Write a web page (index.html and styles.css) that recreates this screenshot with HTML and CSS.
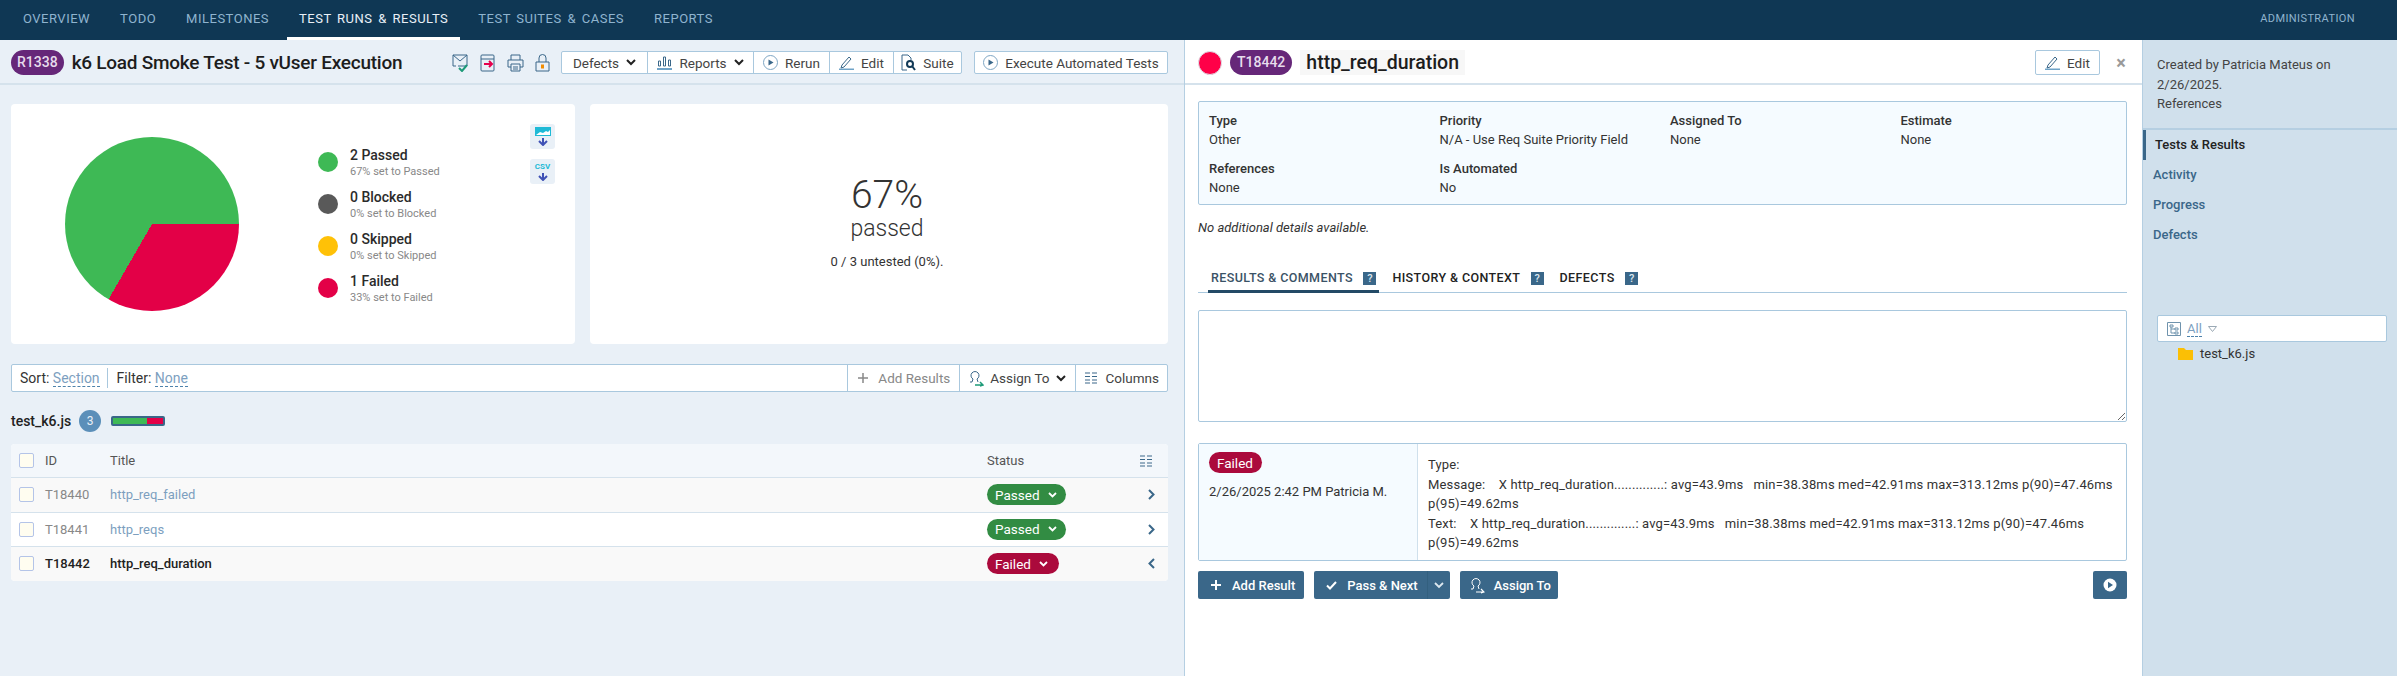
FILE: index.html
```html
<!DOCTYPE html>
<html lang="en">

<head>
    <meta charset="UTF-8">
    <title>k6 Load Smoke Test - 5 vUser Execution</title>
    <link rel="stylesheet" href="styles.css">
</head>

<body>

    <div class="topnav">
        <a href="#" class="tab">Overview</a>
        <a href="#" class="tab">Todo</a>
        <a href="#" class="tab">Milestones</a>
        <a href="#" class="tab active">Test Runs &amp; Results</a>
        <a href="#" class="tab">Test Suites &amp; Cases</a>
        <a href="#" class="tab">Reports</a>
        <a href="#" class="tab admin">Administration</a>
    </div>

    <div class="main">

        <div class="left">
            <div class="run-head">
                <span class="pill">R1338</span>
                <h1>k6 Load Smoke Test - 5 vUser Execution</h1>
                <div class="head-icons">
                    <svg width="17" height="18" viewBox="0 0 17 18"><path d="M1 1h14v11H6M1 1v11h3M1 1l7 6 7-6" fill="none" stroke="#3a6789"/><path d="M7 14l3 3 5-6" fill="none" stroke="#1d9a78" stroke-width="2"/></svg>
                    <svg width="16" height="18" viewBox="0 0 16 18"><path d="M2 1h11a1 1 0 0 1 1 1v14a1 1 0 0 1-1 1H2a1 1 0 0 1-1-1V2a1 1 0 0 1 1-1zM1 5h13" fill="none" stroke="#3a6789"/><path d="M4 10h8M9 7l3 3-3 3" fill="none" stroke="#e6004c" stroke-width="2"/></svg>
                    <svg width="17" height="18" viewBox="0 0 17 18"><path d="M4 6V1h9v5M4 13H1V6h15v7h-3M4 10h9v7H4zM6 13h5M6 15h5" fill="none" stroke="#3a6789"/></svg>
                    <svg width="15" height="18" viewBox="0 0 15 18"><path d="M1 8h13v9H1zM4 8V4a3.500 3.500 0 0 1 7 0v4" fill="none" stroke="#3a6789"/><path d="M7.500 10.500v4" stroke="#f28c00" stroke-width="3"/></svg>
                </div>
                <div class="btn-group">
                    <a href="#" class="btn btn-defects">Defects <svg class="chev" width="10" height="7" viewBox="0 0 10 7"><path d="M1 1l4 4 4-4" fill="none" stroke="#222" stroke-width="2"/></svg></a>
                    <a href="#" class="btn btn-reports"><svg width="15" height="15" viewBox="0 0 15 15"><path d="M1.500 11V6h2v5zM6.500 11V2h2v9zM11.500 11V5h2v6z" fill="none" stroke="#3a6789"/><path d="M0 14h15" stroke="#6fa3c7" stroke-width="2"/></svg> Reports <svg class="chev" width="10" height="7" viewBox="0 0 10 7"><path d="M1 1l4 4 4-4" fill="none" stroke="#222" stroke-width="2"/></svg></a>
                    <a href="#" class="btn btn-rerun"><svg width="15" height="15" viewBox="0 0 15 15"><circle cx="7.500" cy="7.500" r="7" fill="none" stroke="#7fa6c4"/><path d="M5.500 4.500l5 3-5 3z" fill="#3a6789"/></svg> Rerun</a>
                    <a href="#" class="btn btn-edit"><svg width="15" height="15" viewBox="0 0 15 15"><path d="M3 10l7-8 2 2-7 8-3 1z" fill="none" stroke="#3a6789"/><path d="M0 14.500h15" stroke="#6fa3c7" stroke-width="2"/></svg> Edit</a>
                    <a href="#" class="btn btn-suite"><svg width="15" height="17" viewBox="0 0 15 17"><path d="M6 16H1V1h6l3 3v2" fill="none" stroke="#3a6789"/><circle cx="9" cy="10" r="3" fill="none" stroke="#123a57" stroke-width="2"/><path d="M11 12l3 4" stroke="#123a57" stroke-width="2"/></svg> Suite</a>
                </div>
                <a href="#" class="btn single"><svg width="15" height="15" viewBox="0 0 15 15"><circle cx="7.500" cy="7.500" r="7" fill="none" stroke="#7fa6c4"/><path d="M5.500 4.500l5 3-5 3z" fill="#3a6789"/></svg> Execute Automated Tests</a>
            </div>

            <div class="charts">
                <div class="card chart-card">
                    <div class="pie"></div>
                    <div class="legend">
                        <div class="legend-item">
                            <span class="dot green"></span>
                            <div><div class="legend-title">2 Passed</div><div class="legend-sub">67% set to Passed</div></div>
                        </div>
                        <div class="legend-item">
                            <span class="dot gray"></span>
                            <div><div class="legend-title">0 Blocked</div><div class="legend-sub">0% set to Blocked</div></div>
                        </div>
                        <div class="legend-item">
                            <span class="dot yellow"></span>
                            <div><div class="legend-title">0 Skipped</div><div class="legend-sub">0% set to Skipped</div></div>
                        </div>
                        <div class="legend-item">
                            <span class="dot red"></span>
                            <div><div class="legend-title">1 Failed</div><div class="legend-sub">33% set to Failed</div></div>
                        </div>
                    </div>
                    <div class="export">
                        <span class="export-btn"><svg width="16" height="9" viewBox="0 0 16 9"><path d="M0 0h16v9H0z" fill="#1fbad6"/><path d="M1 8l4-3 3 1 3-2 2 1 2-2v5z" fill="#fff"/></svg><svg class="down" width="10" height="8" viewBox="0 0 10 8"><path d="M5 0v6M1 3l4 4 4-4" fill="none" stroke="#3f51b5" stroke-width="2"/></svg></span>
                        <span class="export-btn"><span class="csv">CSV</span><svg class="down" width="10" height="8" viewBox="0 0 10 8"><path d="M5 0v6M1 3l4 4 4-4" fill="none" stroke="#3f51b5" stroke-width="2"/></svg></span>
                    </div>
                </div>
                <div class="card percent-card">
                    <div class="big">67%</div>
                    <div class="big-sub">passed</div>
                    <div class="untested">0 / 3 untested (0%).</div>
                </div>
            </div>

            <div class="toolbar">
                <div class="tool-sort">Sort: <a href="#" class="dashed">Section</a></div>
                <div class="tool-filter">Filter: <a href="#" class="dashed">None</a></div>
                <div class="tool-right">
                    <a href="#" class="tool muted"><svg width="12" height="12" viewBox="0 0 12 12"><path d="M6 1v10M1 6h10" stroke="#888" stroke-width="1.500"/></svg> Add Results</a>
                    <a href="#" class="tool assign-tool"><svg width="15" height="17" viewBox="0 0 15 17"><path d="M1 12h2l1-3a4 4 0 1 1 4 0l1 3" fill="none" stroke="#3a6789"/><path d="M6 15h8M11 12l3 3-3 1" fill="none" stroke="#1d9a78" stroke-width="1.500"/></svg> Assign To <svg class="chev" width="10" height="7" viewBox="0 0 10 7"><path d="M1 1l4 4 4-4" fill="none" stroke="#222" stroke-width="2"/></svg></a>
                    <a href="#" class="tool columns-tool"><svg class="cols" width="12" height="12" viewBox="0 0 12 12"><path d="M0 1h5M7 1h5M0 4.500h5M7 4.500h5M0 8h5M7 8h5M0 11h5M7 11h5" stroke="#3a6789"/></svg> Columns</a>
                </div>
            </div>

            <div class="group-head">
                <span class="group-name">test_k6.js</span>
                <span class="count">3</span>
                <span class="bar"><span class="bar-pass"></span><span class="bar-fail"></span></span>
            </div>

            <div class="grid-table">
                <div class="row header-row">
                    <span class="check"></span>
                    <span class="col-id">ID</span>
                    <span class="col-title">Title</span>
                    <span class="col-status">Status</span>
                    <span class="col-end"><svg class="cols-head" width="12" height="12" viewBox="0 0 12 12"><path d="M0 1h5M7 1h5M0 4.500h5M7 4.500h5M0 8h5M7 8h5M0 11h5M7 11h5" stroke="#3a6789"/></svg></span>
                </div>
                <div class="row alt faded">
                    <span class="check"></span>
                    <span class="col-id">T18440</span>
                    <span class="col-title">http_req_failed</span>
                    <span class="col-status"><span class="status st-passed">Passed <svg width="9" height="6" viewBox="0 0 9 6"><path d="M1 1l3.500 3.500L8 1" fill="none" stroke="#fff" stroke-width="1.800"/></svg></span></span>
                    <span class="col-end"><svg width="7" height="11" viewBox="0 0 7 11"><path d="M1 1l4.500 4.500L1 10" fill="none" stroke="#3a6789" stroke-width="2"/></svg></span>
                </div>
                <div class="row faded">
                    <span class="check"></span>
                    <span class="col-id">T18441</span>
                    <span class="col-title">http_reqs</span>
                    <span class="col-status"><span class="status st-passed">Passed <svg width="9" height="6" viewBox="0 0 9 6"><path d="M1 1l3.500 3.500L8 1" fill="none" stroke="#fff" stroke-width="1.800"/></svg></span></span>
                    <span class="col-end"><svg width="7" height="11" viewBox="0 0 7 11"><path d="M1 1l4.500 4.500L1 10" fill="none" stroke="#3a6789" stroke-width="2"/></svg></span>
                </div>
                <div class="row alt current">
                    <span class="check"></span>
                    <span class="col-id">T18442</span>
                    <span class="col-title">http_req_duration</span>
                    <span class="col-status"><span class="status st-failed">Failed <svg width="9" height="6" viewBox="0 0 9 6"><path d="M1 1l3.500 3.500L8 1" fill="none" stroke="#fff" stroke-width="1.800"/></svg></span></span>
                    <span class="col-end"><svg width="7" height="11" viewBox="0 0 7 11"><path d="M6 1L1.500 5.500 6 10" fill="none" stroke="#3a6789" stroke-width="2"/></svg></span>
                </div>
            </div>
        </div>

        <div class="detail">
            <div class="detail-head">
                <span class="status-dot"></span>
                <span class="pill">T18442</span>
                <span class="detail-title">http_req_duration</span>
                <a href="#" class="btn single edit"><svg width="15" height="15" viewBox="0 0 15 15"><path d="M3 10l7-8 2 2-7 8-3 1z" fill="none" stroke="#3a6789"/><path d="M0 14.500h15" stroke="#6fa3c7" stroke-width="2"/></svg> Edit</a>
                <span class="close">&times;</span>
            </div>

            <div class="detail-body">
                <div class="info-box">
                    <div><div class="info-label">Type</div><div>Other</div></div>
                    <div><div class="info-label">Priority</div><div>N/A - Use Req Suite Priority Field</div></div>
                    <div><div class="info-label">Assigned To</div><div>None</div></div>
                    <div><div class="info-label">Estimate</div><div>None</div></div>
                    <div><div class="info-label">References</div><div>None</div></div>
                    <div><div class="info-label">Is Automated</div><div>No</div></div>
                </div>

                <div class="no-details">No additional details available.</div>

                <div class="detail-tabs">
                    <a href="#" class="dtab active">Results &amp; Comments <span class="help">?</span></a>
                    <a href="#" class="dtab">History &amp; Context <span class="help">?</span></a>
                    <a href="#" class="dtab">Defects <span class="help">?</span></a>
                </div>

                <textarea class="comment"></textarea>

                <div class="result-box">
                    <div class="result-left">
                        <span class="status st-failed plain">Failed</span>
                        <div class="result-date">2/26/2025 2:42 PM Patricia M.</div>
                    </div>
                    <div class="result-right">
                        Type:<br>
                        Message: &nbsp;&nbsp; X http_req_duration..............: avg=43.9ms &nbsp; min=38.38ms med=42.91ms max=313.12ms p(90)=47.46ms p(95)=49.62ms<br>
                        Text: &nbsp;&nbsp; X http_req_duration..............: avg=43.9ms &nbsp; min=38.38ms med=42.91ms max=313.12ms p(90)=47.46ms p(95)=49.62ms
                    </div>
                </div>

                <div class="actions">
                    <a href="#" class="action"><svg width="12" height="12" viewBox="0 0 12 12"><path d="M6 1v10M1 6h10" stroke="#fff" stroke-width="2"/></svg> Add Result</a>
                    <div class="split">
                        <a href="#" class="action"><svg width="11" height="9" viewBox="0 0 11 9"><path d="M1 4.500l3 3 6-6.500" fill="none" stroke="#fff" stroke-width="2"/></svg> Pass &amp; Next</a>
                        <a href="#" class="action caret"><svg width="10" height="7" viewBox="0 0 10 7"><path d="M1 1l4 4 4-4" fill="none" stroke="#dde8f0" stroke-width="1.800"/></svg></a>
                    </div>
                    <a href="#" class="action assign"><svg width="15" height="17" viewBox="0 0 15 17"><path d="M1 12h2l1-3a4 4 0 1 1 4 0l1 3" fill="none" stroke="#fff"/><path d="M6 15h8M11 12l3 3-3 1" fill="none" stroke="#fff" stroke-width="1.200"/></svg> Assign To</a>
                    <a href="#" class="action play"><svg width="14" height="14" viewBox="0 0 14 14"><circle cx="7" cy="7" r="6.500" fill="#fff"/><path d="M5 3.800l5 3.200-5 3.200z" fill="#3a6789"/></svg></a>
                </div>
            </div>
        </div>

        <div class="side">
            <div class="created">Created by Patricia Mateus on 2/26/2025.<br>References</div>
            <div class="side-nav">
                <a href="#" class="side-link active">Tests &amp; Results</a>
                <a href="#" class="side-link">Activity</a>
                <a href="#" class="side-link">Progress</a>
                <a href="#" class="side-link">Defects</a>
            </div>
            <div class="tree-filter">
                <svg width="14" height="14" viewBox="0 0 14 14"><path d="M.5.5h13v13H.5z" fill="none" stroke="#6f93ad"/><path d="M3 3h3v2H3zM8 6h3v2H8zM8 10h3v2H8zM4 5v6h4M4 7h4" fill="none" stroke="#6f93ad"/></svg>
                <a href="#" class="dashed">All</a>
                <svg width="9" height="6" viewBox="0 0 9 6"><path d="M.5.500h8L4.500 5.500z" fill="none" stroke="#9aa9b5"/></svg>
            </div>
            <div class="tree-item">
                <svg width="15" height="12" viewBox="0 0 15 12"><path d="M0 0h6l2 2h7v10H0z" fill="#fbbf05"/></svg>
                test_k6.js
            </div>
        </div>

    </div>

</body>

</html>
```

FILE: styles.css
```css
* {
    box-sizing: border-box;
}

html,
body {
    margin: 0;
    height: 100%;
}

body {
    font-family: Roboto, "Liberation Sans", sans-serif;
    font-size: 13px;
    color: #333;
    background-color: #e9f0f7;
    display: flex;
    flex-direction: column;
    overflow: hidden;
}

a {
    text-decoration: none;
    color: inherit;
}

/* top nav */

.topnav {
    height: 40px;
    background-color: #0f3754;
    display: flex;
    padding-left: 11px;
    flex-shrink: 0;
}

.tab {
    padding: 0 12px;
    margin-right: 6px;
    line-height: 37px;
    height: 40px;
    color: #8fb4cf;
    text-transform: uppercase;
    font-size: 13px;
    letter-spacing: 0.5px;
    word-spacing: 2px;
    white-space: nowrap;
}

.tab.active {
    color: #e9f0f7;
    border-bottom: 3px solid #fff;
}

.tab.admin {
    margin-left: auto;
    margin-right: 30px;
    font-size: 11px;
    letter-spacing: 0.4px;
}

.main {
    flex: 1;
    display: flex;
    min-height: 0;
}

/* left column */

.left {
    width: 1185px;
    flex-shrink: 0;
    padding: 0 16px 0 11px;
    border-right: 1px solid #b5cfe2;
}

.run-head {
    height: 45px;
    margin: 0 -16px 0 -11px;
    padding: 2px 16px 0 11px;
    border-bottom: 2px solid #d5e2ec;
    display: flex;
    align-items: center;
}

.pill {
    display: inline-block;
    background-color: #662779;
    color: #e7dcec;
    font-weight: 500;
    font-size: 14px;
    height: 25px;
    line-height: 25px;
    padding: 0 7px;
    border-radius: 13px;
    margin-right: 8px;
    flex-shrink: 0;
}

.run-head .pill {
    padding: 0 6px;
}

h1 {
    margin: 0;
    font-size: 19px;
    font-weight: 500;
    color: #1d1d1d;
    white-space: nowrap;
    letter-spacing: -0.25px;
}

.head-icons {
    margin-left: auto;
    display: flex;
    gap: 11px;
    margin-right: 11px;
}

.btn-group {
    display: flex;
    border: 1px solid #a9c8de;
    border-radius: 2px;
    background-color: #fff;
    height: 23px;
}

.btn {
    display: flex;
    align-items: center;
    justify-content: center;
    gap: 7px;
    color: #444;
    border-left: 1px solid #a9c8de;
    font-size: 13.500px;
    white-space: nowrap;
}

.btn:first-child {
    border-left: none;
}

.btn-defects {
    width: 85px;
}

.btn-reports {
    width: 106px;
}

.btn-rerun {
    width: 76px;
}

.btn-edit {
    width: 64px;
}

.btn-suite {
    width: 68px;
}

.btn.single {
    margin-left: 12px;
    width: 194px;
    height: 23px;
    border: 1px solid #a9c8de;
    border-radius: 2px;
    background-color: #fff;
}

.chev {
    flex-shrink: 0;
}

/* charts */

.charts {
    display: flex;
    gap: 15px;
    margin-top: 19px;
}

.card {
    background-color: #fff;
    border-radius: 4px;
    height: 240px;
}

.chart-card {
    width: 564px;
    position: relative;
    display: flex;
}

.pie {
    width: 174px;
    height: 174px;
    margin: 33px 0 0 54px;
    border-radius: 50%;
    background: conic-gradient(#3eb955 0 90deg, #e30047 90deg 210deg, #3eb955 210deg 360deg);
}

.legend {
    margin: 37px 0 0 79px;
}

.legend-item {
    display: flex;
    align-items: center;
    height: 42px;
    gap: 12px;
}

.legend-title {
    font-size: 14px;
    font-weight: 500;
    line-height: 18px;
    color: #2b2b2b;
}

.legend-sub {
    font-size: 11px;
    color: #888;
    line-height: 15px;
}

.dot {
    width: 20px;
    height: 20px;
    border-radius: 50%;
    flex-shrink: 0;
}

.dot.green {
    background-color: #3eb955;
}

.dot.gray {
    background-color: #595959;
}

.dot.yellow {
    background-color: #ffc107;
}

.dot.red {
    background-color: #e30047;
}

.export {
    position: absolute;
    top: 20px;
    left: 519px;
    display: flex;
    flex-direction: column;
    gap: 10px;
}

.export-btn {
    width: 25px;
    height: 25px;
    border-radius: 3px;
    background-color: #e9f0f7;
    display: flex;
    flex-direction: column;
    align-items: center;
    justify-content: center;
    gap: 2px;
}

.csv {
    font-size: 8px;
    font-weight: 700;
    line-height: 9px;
    color: #1fbad6;
}

.percent-card {
    flex: 1;
    display: flex;
    flex-direction: column;
    align-items: center;
    padding: 68px 0 0 16px;
    color: #333;
}

.big {
    font-size: 39px;
    line-height: 46px;
    font-weight: 300;
}

.big-sub {
    font-size: 23px;
    line-height: 24px;
    margin-top: -1px;
    font-weight: 300;
}

.untested {
    font-size: 13px;
    margin-top: 13px;
}

/* toolbar */

.toolbar {
    margin-top: 20px;
    height: 28px;
    display: flex;
    align-items: center;
    background-color: #fff;
    border: 1px solid #a9c8de;
    border-radius: 2px;
    font-size: 13.500px;
}

.tool-sort {
    padding: 0 7px 0 8px;
    border-right: 1px solid #a9c8de;
    height: 20px;
    line-height: 20px;
    font-size: 14px;
}

.tool-filter {
    padding: 0 9px;
    line-height: 20px;
    font-size: 14px;
}

.dashed {
    color: #7d9fbf;
    border-bottom: 1px dashed #4d82ab;
}

.tool-right {
    margin-left: auto;
    display: flex;
    height: 100%;
}

.tool {
    display: flex;
    align-items: center;
    gap: 9px;
    padding: 0 9px;
    border-left: 1px solid #a9c8de;
    color: #444;
    white-space: nowrap;
}

.tool.muted {
    color: #888;
}

.tool.assign-tool {
    gap: 6px;
}

.tool.columns-tool {
    padding: 0 8px 0 9px;
}

/* group */

.group-head {
    display: flex;
    align-items: center;
    margin-top: 18px;
    height: 22px;
}

.group-name {
    font-size: 14px;
    font-weight: 500;
    color: #222;
}

.count {
    width: 22px;
    height: 22px;
    border-radius: 50%;
    background-color: #5b8fb9;
    color: #e9f0f7;
    text-align: center;
    line-height: 22px;
    font-size: 12px;
    margin-left: 8px;
}

.bar {
    display: flex;
    width: 54px;
    height: 10px;
    margin-left: 10px;
    border: 2px solid #3a6789;
    border-radius: 2px;
    background-color: #3a6789;
}

.bar-pass {
    width: 67%;
    background-color: #3eb955;
}

.bar-fail {
    flex: 1;
    background-color: #e30047;
}

/* table */

.grid-table {
    margin-top: 12px;
    border-radius: 4px;
    overflow: hidden;
    background-color: #fff;
}

.row {
    display: flex;
    align-items: center;
    height: 34.500px;
    border-top: 1px solid #d5e2ec;
}

.header-row {
    height: 33px;
    border-top: none;
    background-color: #f3f7fb;
    color: #555;
}

.alt {
    background-color: #f9f9f9;
}

.check {
    width: 15px;
    height: 15px;
    margin-left: 8px;
    border: 1px solid #b4c4e8;
    border-radius: 2px;
    background-color: #fffdf0;
    flex-shrink: 0;
}

.col-id {
    width: 65px;
    margin-left: 11px;
}

.col-title {
    flex: 1;
}

.col-status {
    width: 161px;
    display: flex;
}

.col-end {
    width: 20px;
    display: flex;
}

.cols-head {
    margin-left: -8px;
}

.faded .col-id {
    color: #888;
}

.faded .col-title {
    color: #7d9fbf;
}

.current {
    font-weight: 500;
    color: #222;
}

.status {
    display: inline-flex;
    align-items: center;
    gap: 8px;
    height: 21px;
    padding: 0 8px;
    border-radius: 11px;
    color: #fff;
    font-size: 13.500px;
    font-weight: 400;
    white-space: nowrap;
}

.status.st-passed {
    background-color: #328c43;
    width: 79px;
}

.status.st-failed {
    background-color: #ab0a3c;
    width: 72px;
}

.status.plain {
    width: 53px;
}

/* detail panel */

.detail {
    width: 958px;
    flex-shrink: 0;
    background-color: #fff;
    border-right: 1px solid #b5cfe2;
}

.detail-head {
    height: 45px;
    padding: 2px 0 0 13px;
    display: flex;
    align-items: center;
    border-bottom: 2px solid #d5e2ec;
}

.status-dot {
    width: 24px;
    height: 24px;
    border-radius: 50%;
    background-color: #ff0048;
    border: 1px solid #dde3ea;
    margin-right: 8px;
}

.detail-title {
    background-color: #f7f7f7;
    height: 25px;
    line-height: 25px;
    width: 165px;
    padding-left: 6px;
    font-size: 19.500px;
    font-weight: 500;
    color: #1d1d1d;
    white-space: nowrap;
}

.btn.single.edit {
    margin-left: auto;
    height: 25px;
    width: 65px;
}

.close {
    width: 42px;
    text-align: center;
    font-size: 18px;
    font-weight: 700;
    color: #9a9a9a;
}

.detail-body {
    padding: 16px 15px 0 13px;
}

.info-box {
    height: 104px;
    border: 1px solid #a9c8de;
    border-radius: 2px;
    background-color: #f5fbff;
    padding: 9px 10px;
    display: grid;
    grid-template-columns: repeat(4, 230.500px);
    grid-template-rows: 48px 40px;
    line-height: 19px;
}

.info-label {
    font-weight: 500;
}

.no-details {
    font-style: italic;
    margin-top: 13px;
    line-height: 19px;
}

.detail-tabs {
    margin-top: 28px;
    display: flex;
    border-bottom: 1px solid #a9c8de;
    height: 28px;
}

.dtab {
    padding: 0 3px;
    margin-left: 10px;
    height: 28px;
    line-height: 26px;
    text-transform: uppercase;
    font-size: 12.500px;
    font-weight: 500;
    letter-spacing: 0.4px;
    color: #222;
    white-space: nowrap;
}

.dtab.active {
    color: #3a5266;
    border-bottom: 3px solid #234a66;
}

.help {
    display: inline-block;
    width: 13px;
    height: 13px;
    margin-left: 7px;
    line-height: 13px;
    text-align: center;
    background-color: #3a6789;
    color: #dde8f0;
    font-size: 11px;
    letter-spacing: 0;
}

.comment {
    display: block;
    width: 100%;
    height: 112px;
    margin-top: 17px;
    border: 1px solid #a9c8de;
    border-radius: 2px;
    background-color: #fff;
}

.result-box {
    margin-top: 21px;
    display: flex;
    height: 118px;
    border: 1px solid #a9c8de;
    border-radius: 2px;
}

.result-left {
    width: 219px;
    flex-shrink: 0;
    padding: 8px 10px;
    background-color: #f5fbff;
    border-right: 1px solid #cfe0ec;
}

.result-date {
    margin-top: 11px;
    white-space: nowrap;
}

.result-right {
    padding: 11px 10px;
    line-height: 19.500px;
    letter-spacing: 0.15px;
}

.actions {
    margin-top: 10px;
    display: flex;
    gap: 10px;
}

.action {
    display: flex;
    align-items: center;
    gap: 10px;
    height: 28px;
    padding: 0 9px 0 12px;
    background-color: #3a6789;
    border-radius: 2px;
    color: #fff;
    font-weight: 500;
    white-space: nowrap;
}

.split {
    display: flex;
}

.split .action:first-child {
    border-radius: 2px 0 0 2px;
}

.action.caret {
    padding: 0 6px;
    border-radius: 0 2px 2px 0;
    border-left: 1px solid #33607f;
}

.action.assign {
    padding: 0 7px 0 10px;
    gap: 9px;
}

.action.play {
    margin-left: auto;
    width: 34px;
    padding: 0 10px;
}

/* side panel */

.side {
    flex: 1;
    background-color: #d0e0ec;
}

.created {
    padding: 15px 13px 15px 14px;
    height: 90px;
    border-bottom: 2px solid #b5cfe2;
    line-height: 19.500px;
    color: #444;
}

.side-nav {
    display: flex;
    flex-direction: column;
}

.side-link {
    height: 30px;
    line-height: 30px;
    padding-left: 10px;
    color: #3a6789;
    font-weight: 500;
}

.side-link.active {
    border-left: 3px solid #3a6789;
    padding-left: 9px;
    color: #222;
}

.tree-filter {
    margin: 65px 10px 0 14px;
    height: 27px;
    background-color: #fff;
    border: 1px solid #a9c8de;
    border-radius: 2px;
    display: flex;
    align-items: center;
    gap: 6px;
    padding-left: 9px;
}

.tree-item {
    display: flex;
    align-items: center;
    gap: 7px;
    margin: 4px 0 0 35px;
    color: #333;
}
```
